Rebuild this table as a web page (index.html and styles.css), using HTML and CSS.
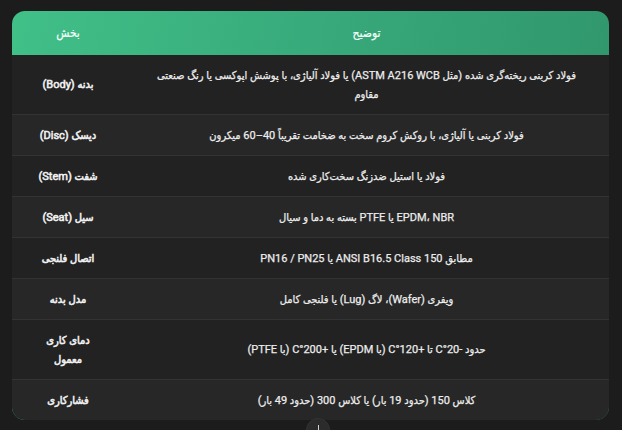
FILE: index.html
```html
<!DOCTYPE html>
<html lang="fa">
<head>
<meta charset="utf-8">
<link rel="stylesheet" href="styles.css">
</head>
<body>
<div class="wrap">
  <table class="spec">
    <thead>
      <tr>
        <th class="col-part" dir="rtl">بخش</th>
        <th class="col-desc" dir="rtl">توضیح</th>
      </tr>
    </thead>
    <tbody>
      <tr>
        <td class="label" dir="rtl">بدنه (Body)</td>
        <td class="desc" dir="rtl">فولاد کربنی ریخته‌گری شده (مثل ASTM A216 WCB) یا فولاد آلیاژی، با پوشش اپوکسی یا رنگ صنعتی مقاوم</td>
      </tr>
      <tr>
        <td class="label" dir="rtl">دیسک (Disc)</td>
        <td class="desc" dir="rtl">فولاد کربنی یا آلیاژی، با روکش کروم سخت به ضخامت تقریباً 40–60 میکرون</td>
      </tr>
      <tr>
        <td class="label" dir="rtl">شفت (Stem)</td>
        <td class="desc" dir="rtl">فولاد یا استیل ضدزنگ سخت‌کاری شده</td>
      </tr>
      <tr>
        <td class="label" dir="rtl">سیل (Seat)</td>
        <td class="desc" dir="rtl">EPDM، NBR یا PTFE بسته به دما و سیال</td>
      </tr>
      <tr>
        <td class="label" dir="rtl">اتصال فلنجی</td>
        <td class="desc" dir="rtl">مطابق ANSI B16.5 Class 150 یا PN16 / PN25</td>
      </tr>
      <tr>
        <td class="label" dir="rtl">مدل بدنه</td>
        <td class="desc" dir="rtl">ویفری (Wafer)، لاگ (Lug) یا فلنجی کامل</td>
      </tr>
      <tr>
        <td class="label" dir="rtl">دمای کاری معمول</td>
        <td class="desc" dir="rtl">حدود -20°C تا +120°C (با EPDM) یا +200°C (با PTFE)</td>
      </tr>
      <tr>
        <td class="label" dir="rtl">فشارکاری</td>
        <td class="desc" dir="rtl">کلاس 150 (حدود 19 بار) یا کلاس 300 (حدود 49 بار)</td>
      </tr>
    </tbody>
  </table>
  <div class="scroll-btn"><span class="arrow"></span></div>
</div>
</body>
</html>
```
FILE: styles.css
```css
html, body {
  margin: 0;
  padding: 0;
  background: #1c1c1c;
}
body {
  font-family: "Roboto", "DejaVu Sans Condensed", "DejaVu Sans", sans-serif;
  color: #e6e6e6;
}
.wrap {
  position: relative;
  padding: 11px 13px 0 12px;
  height: 430px;
  box-sizing: border-box;
  overflow: hidden;
}
.spec {
  width: 597px;
  border-collapse: separate;
  border-spacing: 0;
  border-radius: 13px;
  overflow: hidden;
  table-layout: fixed;
  font-size: 11px;
  background: linear-gradient(100deg, #41c088 0%, #37a87a 50%, #2f9469 100%);
}
.spec thead th {
  background: transparent;
  color: #f4fff9;
  font-weight: 400;
  font-size: 12px;
  height: 44px;
  padding: 0 10px;
  text-align: center;
  box-sizing: border-box;
  -webkit-text-stroke: 0.2px currentColor;
}
.col-part { width: 112px; }
.spec td {
  padding: 10.5px 14px;
  line-height: 19px;
  text-align: center;
  border-top: 1px solid #333333;
  background: #222222;
}
.spec tbody tr:first-child td { border-top: none; }
.spec tbody tr:nth-child(even) td { background: #272727; }
.label {
  font-size: 11px;
  font-weight: 400;
  color: #f2f2f2;
  -webkit-text-stroke: 0.55px currentColor;
  padding-left: 20px !important;
  padding-right: 20px !important;
}
.desc {
  color: #ededed;
  padding-left: 24px !important;
  padding-right: 24px !important;
  -webkit-text-stroke: 0.25px currentColor;
}
.scroll-btn {
  position: absolute;
  left: 306px;
  top: 418px;
  width: 24px;
  height: 24px;
  border-radius: 50%;
  background: #2b2b2b;
  border: 1px solid #333;
  box-sizing: border-box;
}
.arrow {
  position: absolute;
  left: 11px;
  top: 6px;
  width: 1px;
  height: 10px;
  background: #d0d0d0;
}
```
